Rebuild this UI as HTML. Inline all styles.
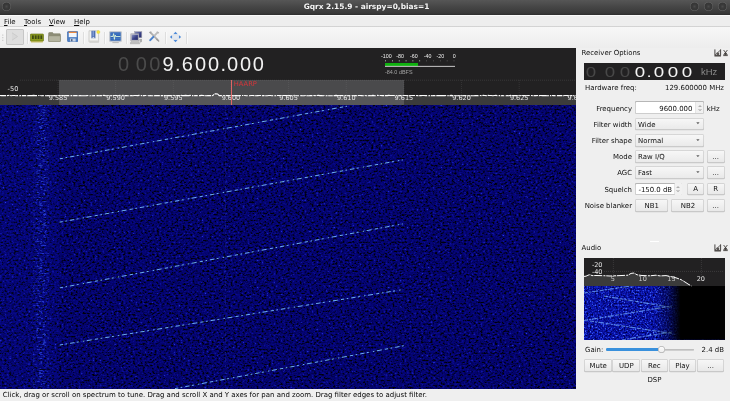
<!DOCTYPE html>
<html><head><meta charset="utf-8"><title>Gqrx 2.15.9 - airspy=0,bias=1</title>
<style>
html,body{margin:0;padding:0;}
body{width:730px;height:401px;overflow:hidden;position:relative;background:#efefef;font-family:"DejaVu Sans","Liberation Sans",sans-serif;font-size:6.95px;line-height:10px;color:#101010;}
.a{position:absolute;white-space:nowrap;}
#wrap{position:absolute;left:0;top:0;width:730px;height:401px;will-change:transform;}
.ar{font-family:"Liberation Sans",sans-serif;}
svg{position:absolute;overflow:hidden;}
#titlebar{left:0;top:0;width:730px;height:14.5px;background:linear-gradient(#565656 0%,#464646 45%,#3a3a3a 85%,#343434 94%,#2c2c2c 100%);}
#title{left:1.5px;width:730px;top:2.2px;text-align:center;color:#f4f4f4;font-weight:bold;font-size:7.43px;line-height:10px;}
.wb{position:absolute;top:2.0px;width:9.4px;height:9.4px;border-radius:50%;background:radial-gradient(circle at 50% 50%,#4a4a4a 0,#3a3a3a 30%,#363636 56%,#616161 68%,#666666 88%,#505050 100%);}
#menubar{left:0;top:14.5px;width:730px;height:12.1px;background:linear-gradient(#fbfbfb 0,#fbfbfb 0.6px,#eeeeee 0.7px,#eeeeee 11.2px,#d3d3d3 11.3px,#d6d6d6 12.1px);}
.mi{top:16.5px;color:#0c0c0c;}
.mi u{text-decoration-thickness:0.7px;text-underline-offset:1.0px;}
#toolbar{left:0;top:26.6px;width:730px;height:21.1px;background:linear-gradient(#f7f7f7,#ededed);}
.sep{position:absolute;top:31.5px;width:0.7px;height:12px;background:#dedede;box-shadow:0.7px 0 0 #fdfdfd;}
#main{left:0;top:48px;width:576px;height:57px;background:#222122;}
#wf{left:0;top:105px;width:576px;height:284px;background:#06066a;overflow:hidden;}
#stxt{left:2.8px;top:389.7px;color:#050505;font-size:6.98px;}
.lab{text-align:right;width:80px;left:552px;}
.inp{position:absolute;box-sizing:border-box;background:#fff;border-radius:1.6px;box-shadow:inset 0 0 0 0.7px #bdbdbd,inset 0 0.9px 0 0 #a2a2a2;}
.cmb{position:absolute;box-sizing:border-box;background:linear-gradient(#f8f8f8,#e9e9e9);border-radius:1.6px;box-shadow:inset 0 0 0 0.7px #cbcbcb,inset 0 -0.8px 0 0 #b9b9b9,0 0.6px 0 0 #dcdcdc;}
.btn{position:absolute;box-sizing:border-box;background:linear-gradient(#f8f8f8,#e7e7e7);border-radius:1.8px;text-align:center;line-height:12px;box-shadow:inset 0 0 0 0.7px #c9c9c9,inset 0 -0.8px 0 0 #b9b9b9,0 0.6px 0 0 #dcdcdc;overflow:hidden;}
.dg{position:absolute;text-align:center;font-family:"Liberation Sans",sans-serif;}
</style></head><body><div id="wrap">

<div class="a" id="titlebar"></div>
<div class="a" id="title">Gqrx 2.15.9 - airspy=0,bias=1</div>
<div class="wb" style="left:1.8px"></div>
<div class="wb" style="left:690.0px"></div>
<div class="wb" style="left:703.9px"></div>
<div class="wb" style="left:717.7px"></div>
<div class="a" id="menubar"></div>
<div class="a mi" id="m0" style="left:4px"><u>F</u>ile</div>
<div class="a mi" id="m1" style="left:24px"><u>T</u>ools</div>
<div class="a mi" id="m2" style="left:49px"><u>V</u>iew</div>
<div class="a mi" id="m3" style="left:74px"><u>H</u>elp</div>
<div class="a" id="toolbar"></div>
<!-- toolbar grip -->
<svg width="3" height="8" style="left:1.7px;top:33.6px" viewBox="0 0 3 8"><g fill="#b8b8b8"><rect x="0.3" y="0.6" width="1" height="1"/><rect x="0.3" y="3.2" width="1" height="1"/><rect x="0.3" y="5.8" width="1" height="1"/></g></svg>
<!-- play (checked/disabled look) -->
<div class="a" style="left:6.4px;top:29.2px;width:17.4px;height:16.2px;box-sizing:border-box;background:#dedede;box-shadow:inset 0 0 0 0.7px #bdbdbd;border-radius:2px;"></div>
<svg width="8" height="9" style="left:11.4px;top:32.4px" viewBox="0 0 8 9"><path d="M1 0.8L6.6 4.5L1 8.2" fill="#d8d8d8" stroke="#cacaca" stroke-width="0.9" stroke-linejoin="round"/></svg>
<div class="sep" style="left:26.6px"></div>
<!-- hardware card -->
<svg width="14" height="10" style="left:30px;top:32.8px" viewBox="0 0 14 10"><rect x="0.3" y="1" width="13.2" height="7.2" rx="0.8" fill="#8a9a1e" stroke="#5f6d12" stroke-width="0.6"/><g fill="#3f4a14"><rect x="2" y="2.4" width="1.8" height="3.6"/><rect x="4.8" y="2.4" width="1.8" height="3.6"/><rect x="7.6" y="2.4" width="1.8" height="3.6"/><rect x="10.4" y="2.4" width="1.8" height="3.6"/></g><rect x="1" y="8.2" width="11.8" height="1.2" fill="#b9b04a"/></svg>
<!-- folder -->
<svg width="13" height="10.2" style="left:47.8px;top:31.8px" viewBox="0 0 13 11" preserveAspectRatio="none"><path d="M0.6 1.4Q0.6 0.6 1.4 0.6H4.6L5.6 1.8H11.6Q12.4 1.8 12.4 2.6V9.6Q12.4 10.4 11.6 10.4H1.4Q0.6 10.4 0.6 9.6Z" fill="#8d8d77" stroke="#77775f" stroke-width="0.5"/><path d="M0.6 4.2H12.4V9.6Q12.4 10.4 11.6 10.4H1.4Q0.6 10.4 0.6 9.6Z" fill="#b4b4a0" stroke="#8a8a72" stroke-width="0.5"/></svg>
<!-- floppy -->
<svg width="11.8" height="11.3" style="left:66.5px;top:30.8px" viewBox="0 0 12 12" preserveAspectRatio="none"><rect x="0.5" y="0.5" width="10.6" height="10.8" rx="0.9" fill="#4d7fc4" stroke="#2f5fa8" stroke-width="0.6"/><rect x="1.8" y="0.8" width="8" height="1.3" fill="#f0883a"/><rect x="1.8" y="2.1" width="8" height="4.4" fill="#f4f6fa"/><rect x="3" y="8" width="5.8" height="3.2" fill="#c7d3e6"/><rect x="4" y="8.6" width="1.6" height="2.3" fill="#4a5f82"/></svg>
<div class="sep" style="left:82.8px"></div>
<!-- bookmarks doc -->
<svg width="13" height="13" style="left:87.6px;top:30.4px" viewBox="0 0 13 13"><path d="M1 0.8H10.6V12.2H1.8Q1 12.2 1 11.4Z" fill="#f3f3f1" stroke="#b6b6b2" stroke-width="0.6"/><path d="M1 10.4H10.6V12.2H1.8Q1 12.2 1 11.4Z" fill="#d4d4d0"/><rect x="3.4" y="0.8" width="4" height="7.6" fill="#4f6fb2"/><path d="M3.4 8.4L5.4 6.9L7.4 8.4Z" fill="#f3f3f1"/><rect x="4.6" y="1" width="1.2" height="5.4" fill="#8aa4d6"/><circle cx="10.3" cy="2" r="1.6" fill="#f6e43a" stroke="#d8c41c" stroke-width="0.3"/></svg>
<div class="sep" style="left:104.2px"></div>
<!-- monitor / scope -->
<svg width="13" height="13" style="left:108.8px;top:30.8px" viewBox="0 0 13 13"><rect x="0.4" y="0.4" width="12.2" height="10.2" rx="0.9" fill="#c3cad4" stroke="#a4acb8" stroke-width="0.4"/><rect x="1.3" y="1.3" width="10.4" height="8.4" fill="#2b62b4"/><path d="M1.4 3H11.6M1.4 5.4H11.6M1.4 7.8H11.6" stroke="#6f9ee0" stroke-width="0.5"/><path d="M1.6 5.4H4L4.6 2.6L5.4 8.4L6.2 4L6.8 5.6H11.4" fill="none" stroke="#dff6d8" stroke-width="0.9"/><rect x="3.4" y="11" width="6.4" height="1.1" fill="#bdbdbd"/></svg>
<div class="sep" style="left:126px"></div>
<!-- network computers -->
<svg width="13" height="14" style="left:129.6px;top:30.6px" viewBox="0 0 13 14"><defs><linearGradient id="scr" x1="0" y1="0" x2="1" y2="1"><stop offset="0" stop-color="#8e96c0"/><stop offset="0.55" stop-color="#3a4288"/><stop offset="1" stop-color="#252b66"/></linearGradient></defs><rect x="4.6" y="0.6" width="7.2" height="6.2" fill="url(#scr)" stroke="#a8a8b2" stroke-width="0.6"/><rect x="0.8" y="2.8" width="8" height="7" fill="#c2c2c8" stroke="#9c9ca4" stroke-width="0.5"/><rect x="1.7" y="3.7" width="6.2" height="5.2" fill="url(#scr)"/><path d="M1 10.6H8.8L9.8 12.8H0.2Z" fill="#c0c0c0" stroke="#9a9a9a" stroke-width="0.4"/><path d="M9.2 8H12V10.8L10.6 11.6H9.8Z" fill="#adadad"/></svg>
<!-- tools -->
<svg width="12" height="11" style="left:148.2px;top:31.4px" viewBox="0 0 13 12"><path d="M2.8 1.8L10.4 9.8" stroke="#b0b0b0" stroke-width="2" stroke-linecap="round"/><path d="M10.4 1.6L6.8 5.4" stroke="#bcbcbc" stroke-width="2" stroke-linecap="round"/><path d="M5.8 6.4L2.4 10" stroke="#4a82cc" stroke-width="2.2" stroke-linecap="round"/><path d="M1 2Q1.6 0.2 3.8 0.6L3 2.8Z" fill="#a6a6a6"/><path d="M9.2 0.6L12.2 1.4L11 3.4Z" fill="#b6b6b6"/><path d="M9.6 9L11.6 11" stroke="#9a9a9a" stroke-width="1.5" stroke-linecap="round"/></svg>
<div class="sep" style="left:165px"></div>
<!-- 4-way arrows -->
<svg width="13" height="12" style="left:169px;top:30.8px" viewBox="0 0 13 12"><g fill="#4e8ad8"><path d="M6.5 0.8L8.5 2.9H4.5Z"/><path d="M6.5 11.2L8.5 9.1H4.5Z"/><path d="M0.8 6L3 4.2V7.8Z"/><path d="M12.2 6L10 4.2V7.8Z"/></g><rect x="3.6" y="3.6" width="5.8" height="4.8" rx="0.9" fill="#e4e9f1" stroke="#c8d2e0" stroke-width="0.5"/></svg>
<div class="sep" style="left:186.4px"></div>

<div class="a" id="main"></div>
<div class="dg" id="d0" style="left:115.60px;top:52.5px;width:16px;font-size:20.0px;line-height:22.0px;color:#4b4b4b;transform:scaleX(1.0)">0</div>
<div class="dg" style="left:133.35px;top:52.5px;width:16px;font-size:20.0px;line-height:22.0px;color:#4b4b4b;transform:scaleX(1.0)">0</div>
<div class="dg" style="left:146.80px;top:52.5px;width:16px;font-size:20.0px;line-height:22.0px;color:#4b4b4b;transform:scaleX(1.0)">0</div>
<div class="dg" id="d9" style="left:160.10px;top:52.5px;width:16px;font-size:20.0px;line-height:22.0px;color:#f2f2f2;transform:scaleX(1.0)">9</div>
<div class="dg" style="left:169.90px;top:52.5px;width:16px;font-size:20.0px;line-height:22.0px;color:#f2f2f2;transform:scaleX(1.0)">.</div>
<div class="dg" style="left:179.25px;top:52.5px;width:16px;font-size:20.0px;line-height:22.0px;color:#f2f2f2;transform:scaleX(1.0)">6</div>
<div class="dg" style="left:192.60px;top:52.5px;width:16px;font-size:20.0px;line-height:22.0px;color:#f2f2f2;transform:scaleX(1.0)">0</div>
<div class="dg" style="left:205.55px;top:52.5px;width:16px;font-size:20.0px;line-height:22.0px;color:#f2f2f2;transform:scaleX(1.0)">0</div>
<div class="dg" style="left:215.30px;top:52.5px;width:16px;font-size:20.0px;line-height:22.0px;color:#f2f2f2;transform:scaleX(1.0)">.</div>
<div class="dg" style="left:224.50px;top:52.5px;width:16px;font-size:20.0px;line-height:22.0px;color:#f2f2f2;transform:scaleX(1.0)">0</div>
<div class="dg" style="left:237.55px;top:52.5px;width:16px;font-size:20.0px;line-height:22.0px;color:#f2f2f2;transform:scaleX(1.0)">0</div>
<div class="dg" id="dl" style="left:250.20px;top:52.5px;width:16px;font-size:20.0px;line-height:22.0px;color:#f2f2f2;transform:scaleX(1.0)">0</div>
<svg width="576" height="57" style="left:0;top:48px" viewBox="0 48 576 57">
<text x="386.4" y="58.4" font-family="Liberation Sans, sans-serif" font-size="5.3" fill="#f2f2f2" text-anchor="middle">-100</text>
<text x="400.1" y="58.4" font-family="Liberation Sans, sans-serif" font-size="5.3" fill="#f2f2f2" text-anchor="middle">-80</text>
<text x="413.9" y="58.4" font-family="Liberation Sans, sans-serif" font-size="5.3" fill="#f2f2f2" text-anchor="middle">-60</text>
<text x="427.5" y="58.4" font-family="Liberation Sans, sans-serif" font-size="5.3" fill="#f2f2f2" text-anchor="middle">-40</text>
<text x="440.4" y="58.4" font-family="Liberation Sans, sans-serif" font-size="5.3" fill="#f2f2f2" text-anchor="middle">-20</text>
<text x="454.2" y="58.4" font-family="Liberation Sans, sans-serif" font-size="5.3" fill="#f2f2f2" text-anchor="middle">0</text>
<rect x="385.15" y="60.2" width="0.7" height="1.2" fill="#d8d8d8" fill-opacity="1"/>
<rect x="392.00" y="60.2" width="0.7" height="1.2" fill="#d8d8d8" fill-opacity="1"/>
<rect x="398.85" y="60.2" width="0.7" height="1.2" fill="#d8d8d8" fill-opacity="1"/>
<rect x="405.70" y="60.2" width="0.7" height="1.2" fill="#d8d8d8" fill-opacity="1"/>
<rect x="412.55" y="60.2" width="0.7" height="1.2" fill="#d8d8d8" fill-opacity="1"/>
<rect x="419.40" y="60.2" width="0.7" height="1.2" fill="#d8d8d8" fill-opacity="1"/>
<rect x="426.25" y="60.2" width="0.7" height="1.2" fill="#d8d8d8" fill-opacity="0.35"/>
<rect x="433.10" y="60.2" width="0.7" height="1.2" fill="#d8d8d8" fill-opacity="0.35"/>
<rect x="439.95" y="60.2" width="0.7" height="1.2" fill="#d8d8d8" fill-opacity="0.35"/>
<rect x="446.80" y="60.2" width="0.7" height="1.2" fill="#d8d8d8" fill-opacity="0.35"/>
<rect x="453.65" y="60.2" width="0.7" height="1.2" fill="#d8d8d8" fill-opacity="0.35"/>
<rect x="385" y="63" width="33" height="3" fill="#10b010"/>
<rect x="385" y="65.9" width="70" height="0.8" fill="#f0f0f0"/>
<text id="dbfs" x="385" y="73.6" font-family="Liberation Sans, sans-serif" font-size="5.45" fill="#a4a4a4">-84.0 dBFS</text>
<rect x="59" y="80" width="345" height="25" fill="#4a4a4c"/>
<rect x="0" y="95.6" width="576" height="9.4" fill="#787878" fill-opacity="0.30"/>
<line x1="20" y1="80.2" x2="576" y2="80.2" stroke="#8a8a8a" stroke-opacity="0.55" stroke-width="0.6" stroke-dasharray="0.7 1.3"/>
<line x1="58.00" y1="80" x2="58.00" y2="95" stroke="#9a9a9a" stroke-opacity="0.38" stroke-width="0.6" stroke-dasharray="0.7 1.3"/>
<line x1="115.65" y1="80" x2="115.65" y2="95" stroke="#9a9a9a" stroke-opacity="0.38" stroke-width="0.6" stroke-dasharray="0.7 1.3"/>
<line x1="173.30" y1="80" x2="173.30" y2="95" stroke="#9a9a9a" stroke-opacity="0.38" stroke-width="0.6" stroke-dasharray="0.7 1.3"/>
<line x1="230.95" y1="80" x2="230.95" y2="95" stroke="#9a9a9a" stroke-opacity="0.38" stroke-width="0.6" stroke-dasharray="0.7 1.3"/>
<line x1="288.60" y1="80" x2="288.60" y2="95" stroke="#9a9a9a" stroke-opacity="0.38" stroke-width="0.6" stroke-dasharray="0.7 1.3"/>
<line x1="346.25" y1="80" x2="346.25" y2="95" stroke="#9a9a9a" stroke-opacity="0.38" stroke-width="0.6" stroke-dasharray="0.7 1.3"/>
<line x1="403.90" y1="80" x2="403.90" y2="95" stroke="#9a9a9a" stroke-opacity="0.38" stroke-width="0.6" stroke-dasharray="0.7 1.3"/>
<line x1="461.55" y1="80" x2="461.55" y2="95" stroke="#9a9a9a" stroke-opacity="0.38" stroke-width="0.6" stroke-dasharray="0.7 1.3"/>
<line x1="519.20" y1="80" x2="519.20" y2="95" stroke="#9a9a9a" stroke-opacity="0.38" stroke-width="0.6" stroke-dasharray="0.7 1.3"/>
<line x1="576.85" y1="80" x2="576.85" y2="95" stroke="#9a9a9a" stroke-opacity="0.38" stroke-width="0.6" stroke-dasharray="0.7 1.3"/>
<path d="M0.0 95.51 L1.6 95.62 L3.2 95.56 L4.8 95.64 L6.4 95.64 L8.0 95.45 L9.6 95.43 L11.2 95.71 L12.8 95.52 L14.4 95.51 L16.0 95.77 L17.6 95.59 L19.2 95.71 L20.8 95.59 L22.4 95.65 L24.0 95.48 L25.6 95.65 L27.2 95.73 L28.8 95.61 L30.4 95.68 L32.0 95.66 L33.6 95.45 L35.2 95.69 L36.8 95.63 L38.4 95.53 L40.0 95.44 L41.6 95.72 L43.2 95.59 L44.8 95.67 L46.4 95.73 L48.0 95.67 L49.6 95.74 L51.2 95.56 L52.8 95.70 L54.4 95.58 L56.0 95.75 L57.6 95.73 L59.2 95.46 L60.8 95.48 L62.4 95.50 L64.0 95.76 L65.6 95.58 L67.2 95.64 L68.8 95.53 L70.4 95.60 L72.0 95.56 L73.6 95.55 L75.2 95.63 L76.8 95.63 L78.4 95.74 L80.0 95.66 L81.6 95.75 L83.2 95.72 L84.8 95.77 L86.4 95.66 L88.0 95.49 L89.6 95.72 L91.2 95.76 L92.8 95.74 L94.4 95.62 L96.0 95.67 L97.6 95.50 L99.2 95.71 L100.8 95.63 L102.4 95.53 L104.0 95.45 L105.6 95.72 L107.2 95.77 L108.8 95.46 L110.4 95.70 L112.0 95.57 L113.6 95.48 L115.2 95.53 L116.8 95.69 L118.4 95.73 L120.0 95.45 L121.6 95.64 L123.2 95.45 L124.8 95.67 L126.4 95.54 L128.0 95.73 L129.6 95.76 L131.2 95.60 L132.8 95.77 L134.4 95.54 L136.0 95.46 L137.6 95.63 L139.2 95.44 L140.8 95.50 L142.4 95.57 L144.0 95.64 L145.6 95.48 L147.2 95.44 L148.8 95.73 L150.4 95.54 L152.0 95.76 L153.6 95.73 L155.2 95.56 L156.8 95.59 L158.4 95.61 L160.0 95.65 L161.6 95.63 L163.2 95.62 L164.8 95.64 L166.4 95.75 L168.0 95.60 L169.6 95.58 L171.2 95.67 L172.8 95.51 L174.4 95.53 L176.0 95.76 L177.6 95.61 L179.2 95.62 L180.8 95.43 L182.4 95.57 L184.0 95.63 L185.6 95.44 L187.2 95.64 L188.8 95.64 L190.4 95.45 L192.0 95.64 L193.6 95.59 L195.2 95.66 L196.8 95.55 L198.4 95.67 L200.0 95.68 L201.6 95.44 L203.2 95.45 L204.8 95.66 L206.4 95.76 L208.0 95.52 L209.6 95.59 L211.2 95.63 L212.8 95.54 L214.4 93.95 L216.0 93.94 L217.6 93.96 L219.2 95.63 L220.8 95.53 L222.4 95.56 L224.0 95.69 L225.6 95.44 L227.2 95.62 L228.8 95.68 L230.4 95.54 L232.0 95.51 L233.6 95.70 L235.2 95.51 L236.8 95.49 L238.4 95.58 L240.0 95.67 L241.6 95.46 L243.2 95.54 L244.8 95.54 L246.4 95.71 L248.0 95.58 L249.6 95.72 L251.2 95.49 L252.8 95.54 L254.4 95.65 L256.0 95.73 L257.6 95.58 L259.2 95.51 L260.8 95.47 L262.4 95.61 L264.0 95.49 L265.6 95.70 L267.2 95.72 L268.8 95.49 L270.4 95.52 L272.0 95.70 L273.6 95.65 L275.2 95.70 L276.8 95.55 L278.4 95.47 L280.0 95.53 L281.6 95.70 L283.2 95.52 L284.8 95.55 L286.4 95.57 L288.0 95.57 L289.6 95.57 L291.2 95.74 L292.8 95.48 L294.4 95.43 L296.0 95.75 L297.6 95.73 L299.2 95.77 L300.8 95.58 L302.4 95.75 L304.0 95.75 L305.6 95.51 L307.2 95.68 L308.8 95.71 L310.4 95.66 L312.0 95.61 L313.6 95.53 L315.2 95.55 L316.8 95.51 L318.4 95.45 L320.0 95.63 L321.6 95.53 L323.2 95.71 L324.8 95.45 L326.4 95.74 L328.0 95.67 L329.6 95.74 L331.2 95.73 L332.8 95.74 L334.4 95.63 L336.0 95.43 L337.6 95.68 L339.2 95.49 L340.8 95.53 L342.4 95.66 L344.0 95.61 L345.6 95.57 L347.2 95.75 L348.8 95.64 L350.4 95.55 L352.0 95.52 L353.6 95.72 L355.2 95.59 L356.8 95.70 L358.4 95.55 L360.0 95.50 L361.6 95.61 L363.2 95.71 L364.8 95.49 L366.4 95.70 L368.0 95.74 L369.6 95.70 L371.2 95.71 L372.8 95.43 L374.4 95.64 L376.0 95.72 L377.6 95.45 L379.2 95.52 L380.8 95.52 L382.4 95.61 L384.0 95.57 L385.6 95.59 L387.2 95.69 L388.8 95.43 L390.4 95.45 L392.0 95.47 L393.6 95.47 L395.2 95.45 L396.8 95.76 L398.4 95.72 L400.0 95.46 L401.6 95.60 L403.2 95.54 L404.8 95.54 L406.4 95.55 L408.0 95.65 L409.6 95.63 L411.2 95.55 L412.8 95.49 L414.4 95.54 L416.0 95.47 L417.6 95.62 L419.2 95.67 L420.8 95.56 L422.4 95.46 L424.0 95.49 L425.6 95.56 L427.2 95.64 L428.8 95.70 L430.4 95.56 L432.0 95.70 L433.6 95.64 L435.2 95.58 L436.8 95.56 L438.4 95.60 L440.0 95.67 L441.6 95.57 L443.2 95.67 L444.8 95.59 L446.4 95.51 L448.0 95.61 L449.6 95.67 L451.2 95.45 L452.8 95.57 L454.4 95.57 L456.0 95.73 L457.6 95.75 L459.2 95.56 L460.8 95.74 L462.4 95.70 L464.0 95.52 L465.6 95.59 L467.2 95.47 L468.8 95.71 L470.4 95.66 L472.0 95.73 L473.6 95.70 L475.2 95.66 L476.8 95.68 L478.4 95.62 L480.0 95.47 L481.6 95.63 L483.2 95.43 L484.8 95.48 L486.4 95.69 L488.0 95.45 L489.6 95.46 L491.2 95.46 L492.8 95.73 L494.4 95.49 L496.0 95.44 L497.6 95.72 L499.2 95.47 L500.8 95.72 L502.4 95.66 L504.0 95.71 L505.6 95.75 L507.2 95.63 L508.8 95.70 L510.4 95.44 L512.0 95.69 L513.6 95.60 L515.2 95.67 L516.8 95.47 L518.4 95.68 L520.0 95.75 L521.6 95.45 L523.2 95.54 L524.8 95.62 L526.4 95.71 L528.0 95.51 L529.6 95.49 L531.2 95.51 L532.8 95.64 L534.4 95.69 L536.0 95.56 L537.6 95.55 L539.2 95.56 L540.8 95.55 L542.4 95.57 L544.0 95.46 L545.6 95.60 L547.2 95.76 L548.8 95.57 L550.4 95.68 L552.0 95.48 L553.6 95.66 L555.2 95.69 L556.8 95.66 L558.4 95.61 L560.0 95.59 L561.6 95.65 L563.2 95.74 L564.8 95.48 L566.4 95.46 L568.0 95.68 L569.6 95.74 L571.2 95.61 L572.8 95.58 L574.4 95.67" stroke="#ffffff" stroke-width="1.15" fill="none" stroke-dasharray="6 0.9 2.5 0.7 8 1.2 1.8 0.8 4.5 0.8 10 1.1 1.4 0.7 3.6 1.3 5.5 0.7"/>
<text x="13" y="90.6" font-family="DejaVu Sans, Liberation Sans, sans-serif" font-size="6.6" fill="#e4e4e4" text-anchor="middle">-50</text>
<text x="58.00" y="99.9" font-family="DejaVu Sans, Liberation Sans, sans-serif" font-size="6.5" fill="#e6e6e6" text-anchor="middle">9.585</text>
<text x="115.65" y="99.9" font-family="DejaVu Sans, Liberation Sans, sans-serif" font-size="6.5" fill="#e6e6e6" text-anchor="middle">9.590</text>
<text x="173.30" y="99.9" font-family="DejaVu Sans, Liberation Sans, sans-serif" font-size="6.5" fill="#e6e6e6" text-anchor="middle">9.595</text>
<text x="230.95" y="99.9" font-family="DejaVu Sans, Liberation Sans, sans-serif" font-size="6.5" fill="#e6e6e6" text-anchor="middle">9.600</text>
<text x="288.60" y="99.9" font-family="DejaVu Sans, Liberation Sans, sans-serif" font-size="6.5" fill="#e6e6e6" text-anchor="middle">9.605</text>
<text x="346.25" y="99.9" font-family="DejaVu Sans, Liberation Sans, sans-serif" font-size="6.5" fill="#e6e6e6" text-anchor="middle">9.610</text>
<text x="403.90" y="99.9" font-family="DejaVu Sans, Liberation Sans, sans-serif" font-size="6.5" fill="#e6e6e6" text-anchor="middle">9.615</text>
<text x="461.55" y="99.9" font-family="DejaVu Sans, Liberation Sans, sans-serif" font-size="6.5" fill="#e6e6e6" text-anchor="middle">9.620</text>
<text x="519.20" y="99.9" font-family="DejaVu Sans, Liberation Sans, sans-serif" font-size="6.5" fill="#e6e6e6" text-anchor="middle">9.625</text>
<text x="576.85" y="99.9" font-family="DejaVu Sans, Liberation Sans, sans-serif" font-size="6.5" fill="#e6e6e6" text-anchor="middle">9.630</text>
<rect x="231.1" y="80" width="0.9" height="25" fill="#f06a6a"/>
<text id="haarp" x="233.8" y="86.2" font-family="DejaVu Sans, Liberation Sans, sans-serif" font-size="6.7" fill="#d8353a">HAARP</text>
</svg>
<svg id="wfsvg" width="576" height="284" style="left:0;top:105px" viewBox="0 105 576 284">
<defs>
<filter id="nz" x="0" y="0" width="100%" height="100%" color-interpolation-filters="sRGB">
<feTurbulence type="fractalNoise" baseFrequency="0.42 0.55" numOctaves="2" seed="11" result="t"/>
<feColorMatrix in="t" type="matrix" values="0 0 1 0 0  0 0 1 0 0  0 0 1 0 0  0 0 0 0 1"/>
<feComponentTransfer>
<feFuncR type="table" tableValues="0 0 0 0.004 0.01 0.016 0.02 0.035 0.08 0.16 0.2"/>
<feFuncG type="table" tableValues="0 0 0 0.004 0.01 0.016 0.02 0.04 0.11 0.24 0.3"/>
<feFuncB type="table" tableValues="0 0 0 0.09 0.32 0.43 0.475 0.54 0.68 0.88 1"/>
</feComponentTransfer>
</filter>
<filter id="nz2" x="0" y="0" width="100%" height="100%" color-interpolation-filters="sRGB">
<feTurbulence type="fractalNoise" baseFrequency="0.28 0.75" numOctaves="2" seed="5" result="t"/>
<feColorMatrix in="t" type="matrix" values="0 0 0 0 0.22  0 0 0 0 0.36  0 0 0 0 1  0 0 5 0 -2.75"/>
</filter>
<clipPath id="wfc"><rect x="0" y="105" width="576" height="284"/></clipPath>
</defs>
<rect x="0" y="105" width="576" height="284" fill="#06066a"/>
<rect x="0" y="105" width="576" height="284" filter="url(#nz)"/>
<rect x="33" y="105" width="16" height="284" filter="url(#nz2)" opacity="0.33"/>
<rect x="37.5" y="105" width="8" height="284" filter="url(#nz2)" opacity="0.42"/>
<rect x="0" y="105" width="59" height="284" fill="#2030ff" opacity="0.06"/>
<g clip-path="url(#wfc)" stroke-linecap="butt" fill="none">
<path d="M59.8 158.8 L347 106.2" stroke="#4f7ce8" stroke-opacity="0.14" stroke-width="0.9"/>
<path d="M59.8 158.8 L347 106.2" stroke="#78c0ff" stroke-opacity="0.88" stroke-width="1.0" stroke-dasharray="3.2 2.6 1.6 3 4.4 2.4 2 4.2 1.4 2.6 5 3.2"/>
<path d="M59.6 222.2 L402.8 159.9" stroke="#4f7ce8" stroke-opacity="0.14" stroke-width="0.9"/>
<path d="M59.6 222.2 L402.8 159.9" stroke="#78c0ff" stroke-opacity="0.88" stroke-width="1.0" stroke-dasharray="3.2 2.6 1.6 3 4.4 2.4 2 4.2 1.4 2.6 5 3.2"/>
<path d="M59.8 287.9 L402.8 223.9" stroke="#4f7ce8" stroke-opacity="0.14" stroke-width="0.9"/>
<path d="M59.8 287.9 L402.8 223.9" stroke="#78c0ff" stroke-opacity="0.88" stroke-width="1.0" stroke-dasharray="3.2 2.6 1.6 3 4.4 2.4 2 4.2 1.4 2.6 5 3.2"/>
<path d="M59.8 345.0 L402.8 289.6" stroke="#4f7ce8" stroke-opacity="0.14" stroke-width="0.9"/>
<path d="M59.8 345.0 L402.8 289.6" stroke="#78c0ff" stroke-opacity="0.88" stroke-width="1.0" stroke-dasharray="3.2 2.6 1.6 3 4.4 2.4 2 4.2 1.4 2.6 5 3.2"/>
<path d="M175 388.6 L404 345.7" stroke="#4f7ce8" stroke-opacity="0.14" stroke-width="0.9"/>
<path d="M175 388.6 L404 345.7" stroke="#78c0ff" stroke-opacity="0.88" stroke-width="1.0" stroke-dasharray="3.2 2.6 1.6 3 4.4 2.4 2 4.2 1.4 2.6 5 3.2"/>
</g>
<path d="M225.5 105V389" stroke="#5a7cff" stroke-opacity="0.16" stroke-width="0.9" stroke-dasharray="3 2 5 3 2 4"/>
</svg>
<div class="a" id="stxt">Click, drag or scroll on spectrum to tune. Drag and scroll X and Y axes for pan and zoom. Drag filter edges to adjust filter.</div>
<div class="a" id="rxo" style="left:581.5px;top:48.0px">Receiver Options</div>
<div class="a" id="aud" style="left:581.5px;top:243.1px">Audio</div>
<svg width="15" height="8" style="left:714px;top:49.3px" viewBox="0 0 15 8" fill="none" stroke="#474442" stroke-width="1"><path d="M0.9 0.4V6.6H6.6V0.4"/><path d="M1 6L6.4 1.2" stroke-width="0.8"/><rect x="2.6" y="3.6" width="2.6" height="2.6" fill="#5a5755" stroke="none"/><path d="M0.4 7H7" stroke-width="0.9"/><path d="M9.6 1L13.4 6M13.4 1L9.6 6" stroke-width="0.9"/><path d="M10.4 3.8H12.6V6.4H10.4Z" fill="#474442" stroke="none"/><path d="M9.2 6.6H13.8" stroke-width="0.9"/></svg>
<svg width="15" height="8" style="left:714px;top:244.3px" viewBox="0 0 15 8" fill="none" stroke="#474442" stroke-width="1"><path d="M0.9 0.4V6.6H6.6V0.4"/><path d="M1 6L6.4 1.2" stroke-width="0.8"/><rect x="2.6" y="3.6" width="2.6" height="2.6" fill="#5a5755" stroke="none"/><path d="M0.4 7H7" stroke-width="0.9"/><path d="M9.6 1L13.4 6M13.4 1L9.6 6" stroke-width="0.9"/><path d="M10.4 3.8H12.6V6.4H10.4Z" fill="#474442" stroke="none"/><path d="M9.2 6.6H13.8" stroke-width="0.9"/></svg>
<div class="a" id="lcd" style="left:584.1px;top:63.1px;width:140.9px;height:16.9px;background:#222122"></div>
<div class="dg" id="r0" style="left:583.00px;top:62.6px;width:16px;font-size:15.1px;line-height:18px;color:#484848;transform:scaleX(1.24)">0</div>
<div class="dg" style="left:602.30px;top:62.6px;width:16px;font-size:15.1px;line-height:18px;color:#484848;transform:scaleX(1.24)">0</div>
<div class="dg" style="left:616.80px;top:62.6px;width:16px;font-size:15.1px;line-height:18px;color:#484848;transform:scaleX(1.24)">0</div>
<div class="dg" id="r3" style="left:631.60px;top:62.6px;width:16px;font-size:15.1px;line-height:18px;color:#f4f4f4;transform:scaleX(1.24)">0</div>
<div class="dg" style="left:641.05px;top:62.6px;width:16px;font-size:15.1px;line-height:18px;color:#f4f4f4;transform:scaleX(1.24)">.</div>
<div class="dg" style="left:650.80px;top:62.6px;width:16px;font-size:15.1px;line-height:18px;color:#f4f4f4;transform:scaleX(1.24)">0</div>
<div class="dg" style="left:665.20px;top:62.6px;width:16px;font-size:15.1px;line-height:18px;color:#f4f4f4;transform:scaleX(1.24)">0</div>
<div class="dg" style="left:679.35px;top:62.6px;width:16px;font-size:15.1px;line-height:18px;color:#f4f4f4;transform:scaleX(1.24)">0</div>
<div class="a ar" id="lkhz" style="left:701.2px;top:66.6px;font-size:8.6px;line-height:10px;color:#8c8c8c;transform-origin:0 0;transform:scaleX(1.1)">kHz</div>
<div class="a" id="hwl" style="left:585px;top:83.3px">Hardware freq:</div>
<div class="a" id="hwv" style="right:6px;top:83.3px">129.600000 MHz</div>
<div class="a lab" style="top:103.8px">Frequency</div>
<div class="a lab" style="top:119.6px">Filter width</div>
<div class="a lab" style="top:135.9px">Filter shape</div>
<div class="a lab" style="top:152.2px">Mode</div>
<div class="a lab" style="top:168.3px">AGC</div>
<div class="a lab" style="top:184.6px">Squelch</div>
<div class="a lab" style="top:200.9px">Noise blanker</div>
<div class="inp" style="left:635.2px;top:101.1px;width:68.9px;height:12.6px"></div>
<div style="position:absolute;left:696.3px;top:101.7px;width:7.2px;height:11.4px;background:#f1f1f1;box-shadow:-0.6px 0 0 #d4d4d4;border-radius:0 1.2px 1.2px 0"></div>
<svg width="4" height="8" style="left:698.0px;top:103.6px" viewBox="0 0 4 8"><path d="M0.8 2.9L2 1.7L3.2 2.9M0.8 5.3L2 6.5L3.2 5.3" fill="none" stroke="#6a6a6a" stroke-width="0.8"/></svg>
<div class="a" style="right:37.6px;top:103.8px">9600.000</div>
<div class="a" id="fkhz" style="left:706.8px;top:103.8px">kHz</div>
<div class="cmb" style="left:635.2px;top:117.7px;width:68.9px;height:12.6px"></div>
<div class="a" style="left:638.1px;top:119.6px">Wide</div>
<svg width="3.8" height="2.3" style="left:696.0px;top:122.3px" viewBox="0 0 5 3"><path d="M0.3 0.3H4.7L2.5 2.8Z" fill="#606060"/></svg>
<div class="cmb" style="left:635.2px;top:134.0px;width:68.9px;height:12.6px"></div>
<div class="a" style="left:638.1px;top:135.9px">Normal</div>
<svg width="3.8" height="2.3" style="left:696.0px;top:138.6px" viewBox="0 0 5 3"><path d="M0.3 0.3H4.7L2.5 2.8Z" fill="#606060"/></svg>
<div class="cmb" style="left:635.2px;top:150.3px;width:68.9px;height:12.6px"></div>
<div class="a" style="left:638.1px;top:152.2px">Raw I/Q</div>
<svg width="3.8" height="2.3" style="left:696.0px;top:154.9px" viewBox="0 0 5 3"><path d="M0.3 0.3H4.7L2.5 2.8Z" fill="#606060"/></svg>
<div class="cmb" style="left:635.2px;top:166.4px;width:68.9px;height:12.6px"></div>
<div class="a" style="left:638.1px;top:168.3px">Fast</div>
<svg width="3.8" height="2.3" style="left:696.0px;top:171.0px" viewBox="0 0 5 3"><path d="M0.3 0.3H4.7L2.5 2.8Z" fill="#606060"/></svg>
<div class="btn" style="left:706.7px;top:150.3px;width:17.9px;height:12.6px;line-height:14.6px">...</div>
<div class="btn" style="left:706.7px;top:166.4px;width:17.9px;height:12.6px;line-height:14.6px">...</div>
<div class="inp" style="left:635.2px;top:182.7px;width:47.3px;height:12.6px"></div>
<div style="position:absolute;left:674.7px;top:183.3px;width:7.2px;height:11.4px;background:#f1f1f1;box-shadow:-0.6px 0 0 #d4d4d4;border-radius:0 1.2px 1.2px 0"></div>
<svg width="4" height="8" style="left:676.4px;top:185.2px" viewBox="0 0 4 8"><path d="M0.8 2.9L2 1.7L3.2 2.9M0.8 5.3L2 6.5L3.2 5.3" fill="none" stroke="#6a6a6a" stroke-width="0.8"/></svg>
<div class="a" style="right:57.9px;top:184.6px">-150.0 dB</div>
<div class="btn" style="left:686.6px;top:182.7px;width:17.9px;height:12.6px;line-height:13.0px">A</div>
<div class="btn" style="left:706.7px;top:182.7px;width:17.9px;height:12.6px;line-height:13.0px">R</div>
<div class="btn" style="left:635.2px;top:199.0px;width:33.1px;height:12.6px;line-height:14.3px">NB1</div>
<div class="btn" style="left:671.4px;top:199.0px;width:33.1px;height:12.6px;line-height:14.3px">NB2</div>
<div class="btn" style="left:706.7px;top:199.0px;width:17.9px;height:12.6px;line-height:14.6px">...</div>
<div class="a" style="left:584px;top:258.1px;width:141px;height:28px;background:#222122"></div>
<div class="a" style="left:584px;top:286px;width:141px;height:53.8px;background:#000"></div>
<svg width="141" height="82" style="left:584px;top:258px" viewBox="584 258 141 82">
<defs>
<filter id="anz" x="0" y="0" width="100%" height="100%" color-interpolation-filters="sRGB">
<feTurbulence type="fractalNoise" baseFrequency="0.62 0.62" numOctaves="2" seed="4" result="t"/>
<feColorMatrix in="t" type="matrix" values="0 0 1 0 0  0 0 1 0 0  0 0 1 0 0  0 0 0 0 1"/>
<feComponentTransfer>
<feFuncR type="table" tableValues="0 0 0 0.01 0.02 0.035 0.06 0.14 0.28 0.45 0.45"/>
<feFuncG type="table" tableValues="0 0 0 0.015 0.035 0.065 0.12 0.25 0.42 0.65 0.65"/>
<feFuncB type="table" tableValues="0.15 0.15 0.25 0.38 0.53 0.63 0.74 0.88 0.97 1 1"/>
</feComponentTransfer>
</filter>
<linearGradient id="afade" x1="0" x2="1" y1="0" y2="0"><stop offset="0" stop-color="#000" stop-opacity="0"/><stop offset="0.5" stop-color="#000" stop-opacity="0"/><stop offset="0.6" stop-color="#000" stop-opacity="0.4"/><stop offset="0.685" stop-color="#000" stop-opacity="1"/><stop offset="1" stop-color="#000" stop-opacity="1"/></linearGradient>
<clipPath id="awc"><rect x="584" y="286" width="141" height="53.8"/></clipPath>
</defs>
<rect x="584" y="286" width="141" height="53.8" filter="url(#anz)"/>
<g clip-path="url(#awc)" stroke="#78b2ff" stroke-opacity="0.7" stroke-width="1.1" fill="none" stroke-dasharray="4 1.2 2 1 6 1.6">
<path d="M584 293 L634 285.6"/>
<path d="M604 296 L672 307.5"/>
<path d="M584 320.5 L672 306"/>
<path d="M590 321 L672 333.5"/>
<path d="M622 339.8 L672 332"/>
</g>
<rect x="584" y="286" width="141" height="53.8" fill="url(#afade)"/>
<line x1="604" y1="271.4" x2="724" y2="271.4" stroke="#8a8a8a" stroke-opacity="0.6" stroke-width="0.6" stroke-dasharray="0.7 1.3"/>
<line x1="613.4" y1="258" x2="613.4" y2="276" stroke="#8a8a8a" stroke-opacity="0.55" stroke-width="0.6" stroke-dasharray="0.7 1.3"/>
<line x1="701.4" y1="258" x2="701.4" y2="276" stroke="#8a8a8a" stroke-opacity="0.55" stroke-width="0.6" stroke-dasharray="0.7 1.3"/>
<text x="602.5" y="267.0" font-family="DejaVu Sans, Liberation Sans, sans-serif" font-size="6.5" fill="#e6e6e6" text-anchor="end">-20</text>
<text x="602.5" y="273.8" font-family="DejaVu Sans, Liberation Sans, sans-serif" font-size="6.5" fill="#e6e6e6" text-anchor="end">-40</text>
<text x="612.9" y="281.1" font-family="DejaVu Sans, Liberation Sans, sans-serif" font-size="6.5" fill="#e6e6e6" text-anchor="middle">5</text>
<text x="642.7" y="281.1" font-family="DejaVu Sans, Liberation Sans, sans-serif" font-size="6.5" fill="#e6e6e6" text-anchor="middle">10</text>
<text x="671.4" y="281.1" font-family="DejaVu Sans, Liberation Sans, sans-serif" font-size="6.5" fill="#e6e6e6" text-anchor="middle">15</text>
<text x="700.8" y="281.1" font-family="DejaVu Sans, Liberation Sans, sans-serif" font-size="6.5" fill="#e6e6e6" text-anchor="middle">20</text>
<path d="M584 276.4 L586 276.2 L588 275.2 L590 274.6 L592 275.6 L596 275.5 L604 275.7 L610 276 L620 275.6 L628 275.2 L631 273.4 L634 273 L637 274.8 L642 275.5 L650 275.8 L656 275.2 L660 275.9 L666 275.6 L671 276.6 L676 277.8 L681 279.6 L685 282 L688 284 L691.5 286 L584 286 Z" fill="#787878" fill-opacity="0.30" stroke="none"/>
<path d="M584 276.4 L586 276.2 L588 275.2 L590 274.6 L592 275.6 L596 275.5 L604 275.7 L610 276 L620 275.6 L628 275.2 L631 273.4 L634 273 L637 274.8 L642 275.5 L650 275.8 L656 275.2 L660 275.9 L666 275.6 L671 276.6 L676 277.8 L681 279.6 L685 282 L688 284 L691.5 286" fill="none" stroke="#ffffff" stroke-width="1" stroke-dasharray="6 1 3 0.8 8 1.2 2 0.8"/>
</svg>
<div class="a" id="gain" style="left:585px;top:345.3px">Gain:</div>
<div class="a" style="left:606px;top:348.7px;width:88px;height:1.9px;background:#cfcfcf;border-radius:1px;box-shadow:inset 0 0.4px 0 #b0b0b0"></div>
<div class="a" style="left:606px;top:348.2px;width:55px;height:2.7px;background:#3990dc;border-radius:1.3px"></div>
<div class="a" style="left:657.6px;top:346.1px;width:7px;height:7px;border-radius:50%;background:linear-gradient(#fdfdfd,#ececec);box-shadow:inset 0 0 0 0.7px #b2b2b2"></div>
<div class="a" id="gdb" style="right:6px;top:345.3px">2.4 dB</div>
<div class="btn" style="left:584.3px;top:358.9px;width:27.8px;height:12.9px;line-height:14.5px">Mute</div>
<div class="btn" style="left:612.4px;top:358.9px;width:27.8px;height:12.9px;line-height:14.5px">UDP</div>
<div class="btn" style="left:640.5px;top:358.9px;width:27.8px;height:12.9px;line-height:14.5px">Rec</div>
<div class="btn" style="left:668.6px;top:358.9px;width:27.8px;height:12.9px;line-height:14.5px">Play</div>
<div class="btn" style="left:696.6999999999999px;top:358.9px;width:27.8px;height:12.9px;line-height:14.9px">...</div>
<div class="a" id="dsp" style="left:584px;width:141px;text-align:center;top:374.7px">DSP</div>
<div class="a" style="left:650px;top:240.6px;width:9px;height:0.6px;background:#fff"></div>
</div></body></html>
